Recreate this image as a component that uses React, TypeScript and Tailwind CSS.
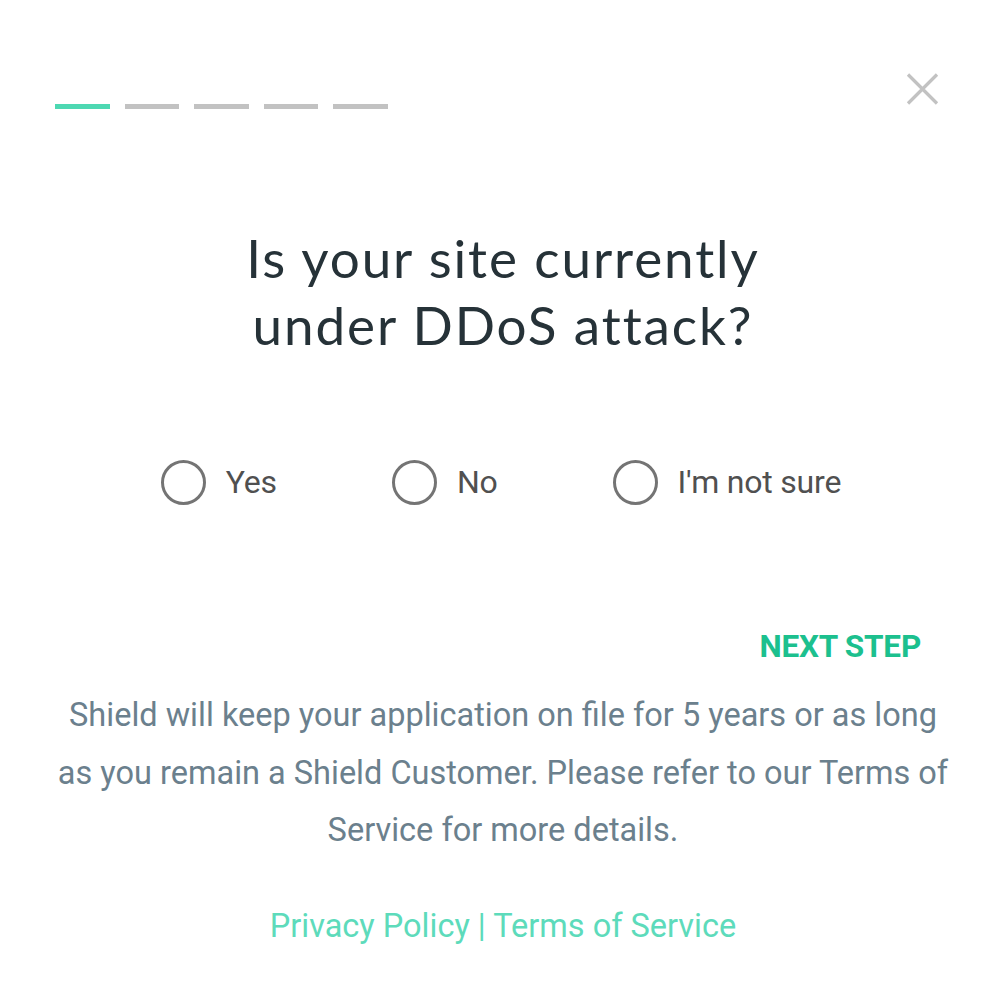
import { useState } from 'react';

const options = ['Yes', 'No', "I'm not sure"];

export default function App() {
  const [step] = useState(0);
  const [choice, setChoice] = useState<string | null>(null);

  return (
    <div className="w-[1000px] h-[983px] bg-white font-['Roboto',sans-serif]">
      <div className="pl-[55px] pr-[49px] pt-[72px]">
        {/* progress + close */}
        <div className="flex items-start justify-between pr-[11px]">
          <div className="flex gap-[15px] pt-[32px]">
            {[0, 1, 2, 3, 4].map((i) => (
              <div
                key={i}
                className={
                  i === step
                    ? 'h-[5px] w-[54.5px] bg-[#4dd8b2]'
                    : 'h-[5px] w-[54.5px] bg-[#c2c2c2]'
                }
              />
            ))}
          </div>
          <button className="w-[35px] h-[34px] flex items-center justify-center text-[#c2c2c2]">
            <svg width="35" height="34" viewBox="0 0 35 34" fill="none">
              <path d="M3 2.5 L32 31.5 M32 2.5 L3 31.5" stroke="currentColor" strokeWidth="3.2" />
            </svg>
          </button>
        </div>

        {/* question */}
        <h1 className="mt-[115px] text-center text-[53px] leading-[67px] text-[#263238] font-['Lato',sans-serif] tracking-[1.9px]">
          Is your site currently
          <br />
          under DDoS attack?
        </h1>

        {/* options */}
        <div className="mt-[100px] flex justify-center gap-[115px] pr-[4px]">
          {options.map((opt) => (
            <label
              key={opt}
              className="flex items-center gap-[20px] cursor-pointer"
              onClick={() => setChoice(opt)}
            >
              <span className="w-[45px] h-[45px] rounded-full border-[3px] border-[#747474] flex items-center justify-center">
                {choice === opt && <span className="w-[21px] h-[21px] rounded-full bg-[#1bbf8d]" />}
              </span>
              <span className="text-[32px] text-[#505050] tracking-[-0.2px]">{opt}</span>
            </label>
          ))}
        </div>

        {/* next */}
        <div className="mt-[122px] flex justify-end pr-[30px]">
          <button className="text-[31.5px] font-bold text-[#1cc08e] tracking-[-0.2px] leading-[37px]">
            NEXT STEP
          </button>
        </div>

        <p className="mt-[22px] mx-auto w-[892px] text-center text-[32.5px] leading-[57.5px] text-[#6b808d]">
          Shield will keep your application on file for 5 years or as long as you remain a Shield
          Customer. Please refer to our Terms of Service for more details.
        </p>

        <div className="mt-[47px] text-center text-[32.5px] leading-[38px] text-[#5ddbbb]">
          <a href="#">Privacy Policy</a> | <a href="#">Terms of Service</a>
        </div>
      </div>
    </div>
  );
}
